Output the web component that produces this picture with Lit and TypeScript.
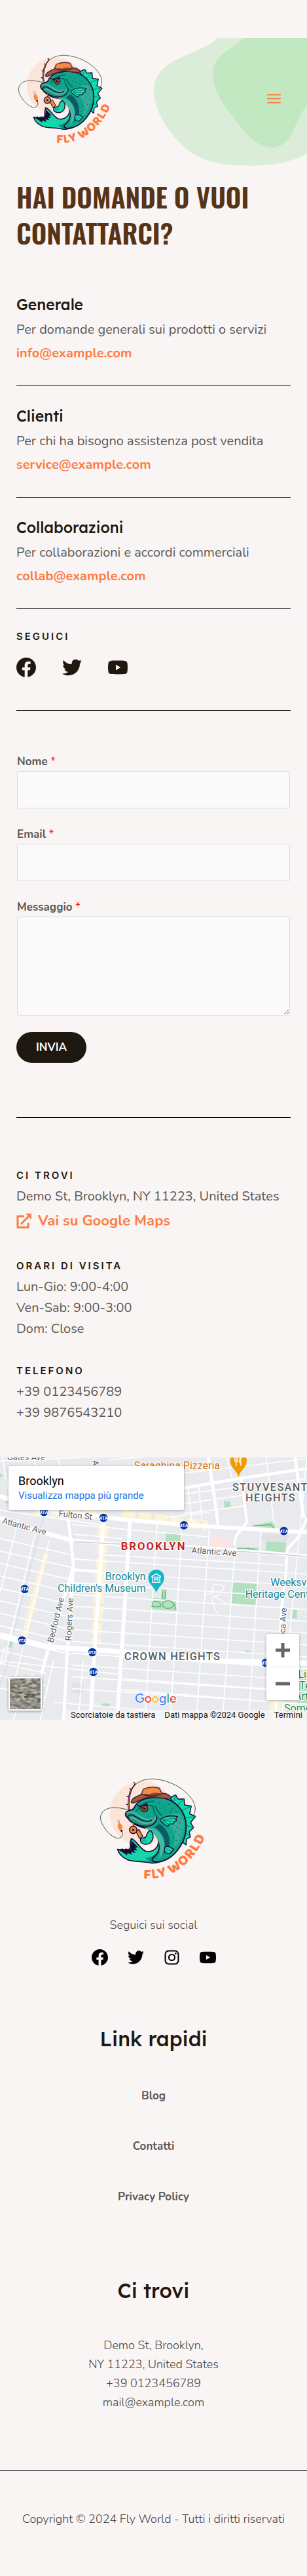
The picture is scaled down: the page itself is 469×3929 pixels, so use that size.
import { LitElement, html, svg, css } from "lit";
import { customElement } from "lit/decorators.js";

const DARK = "#1a0b33";

@customElement("fly-logo")
export class FlyLogo extends LitElement {
  static styles = css`
    :host { display: block; }
    svg { display: block; width: 100%; height: auto; }
    .word { font: 800 58px "Baloo 2", Lato, sans-serif; letter-spacing: 3px; fill: #ff7b42; }
  `;
  render() {
    return html`<svg viewBox="0 0 480 480" role="img" aria-label="Fly World">
      <circle cx="192" cy="182" r="130" fill="#fbe5d9" />
      <g fill="none" stroke="#3f5330" stroke-width="2.6">
        <path d="M146 100 C160 52 205 42 238 43 C300 47 360 78 392 122 C410 148 410 170 400 188" />
        <path d="M133 167 C84 152 32 154 25 196 C22 222 62 276 92 281 C112 284 118 266 110 250" />
      </g>
      <path d="M140 170 C136 140 140 105 150 84" fill="none" stroke="${DARK}" stroke-width="7" />
      <path d="M140 170 C136 140 140 105 150 84" fill="none" stroke="#b96a44" stroke-width="3" />
      <path d="M150 84 L165 62 M142 81 l8 4 M158 56 l8 6 M131 114 h9 M128 146 h9" fill="none" stroke="${DARK}" stroke-width="3.5" />
      <ellipse cx="104" cy="236" rx="9" ry="16" transform="rotate(-15 104 236)" fill="#f58b41" />
      <path d="M101 222 L91 208 M102 220 L99 204" stroke="#7d6b7d" stroke-width="1.6" />
      <circle cx="110" cy="252" r="4" fill="${DARK}" />

      <path d="M305 118 L328 107 L338 124 L362 123 L364 148 L391 152 L384 183 L408 194 L388 218 L400 239 L382 256 L388 276 L371 285 L370 308 L345 290 L350 190 Z" fill="#0fdcae" stroke="${DARK}" stroke-width="4" stroke-linejoin="round" />
      <path d="M328 107 L322 132 M362 123 L336 148 M391 152 L352 170 M408 194 L360 200 M400 239 L364 228 M388 276 L364 258" stroke="#0c7f74" stroke-width="3" />

      <path d="M94 326 l10 2 8-3 8 3 8-3 10 2 6-4 2-12-1-10 4-18 C172 290 180 322 208 334 C236 340 262 318 258 290 L330 320 C300 370 262 384 226 381 C190 372 156 378 134 368 C112 358 98 342 94 326Z" fill="#14d6aa" stroke="${DARK}" stroke-width="4.5" stroke-linejoin="round" />
      <path d="M96 328 L146 328 L150 290 L176 318 L164 320 L174 330 L158 330 L166 340 L148 337 L152 348 L134 341 L132 350 L118 340Z" fill="${DARK}" />
      <path d="M206 362 C232 358 252 346 262 326 L318 330 C292 366 262 380 226 379Z" fill="#0c8f7d" />

      <path d="M129 176 C142 166 158 172 164 152 C178 128 214 118 252 117 C330 118 374 180 370 242 C367 304 318 368 262 376 C236 380 222 370 246 352 C272 326 264 284 246 262 C236 248 222 240 204 240 C176 236 148 220 136 202 C126 194 124 184 129 176Z" fill="#0fa58a" stroke="${DARK}" stroke-width="5" />
      <path d="M204 240 C240 234 262 250 276 278 C292 316 276 350 258 366 C276 324 264 270 204 240Z" fill="#43b8a5" />
      <path d="M262 222 C292 240 312 280 300 322 L276 352 C294 310 284 262 242 238Z" fill="#0a5b66" />
      <path d="M306 190 C330 170 350 180 360 206 C368 250 346 302 316 322 C334 280 322 240 296 226Z" fill="#31ae97" />
      <path d="M232 150 C246 168 238 196 262 204 M244 150 C252 170 262 180 272 190" fill="none" stroke="#07655f" stroke-width="5" />
      <path d="M168 172 Q196 148 234 150 M176 158 Q200 136 240 132" fill="none" stroke="#075b59" stroke-width="4" />

      <path d="M133 184 C150 172 168 190 188 198 C214 212 236 208 242 188 C262 204 240 232 208 232 C176 232 146 216 136 200Z" fill="#23947f" />
      <path d="M132 180 C150 166 170 188 190 197 C208 208 228 212 234 200 M138 203 C156 190 172 212 196 219 C222 226 248 214 248 190" fill="none" stroke="#46bfa5" stroke-width="6" />
      <path d="M136 190 C156 182 170 198 188 208 C206 214 224 216 232 207 M134 192 L142 204 M140 208 C164 226 190 238 222 232 C244 226 256 208 250 190" fill="none" stroke="${DARK}" stroke-width="4" />

      <path d="M166 146 L190 151 L214 140 L216 152 L190 159Z" fill="${DARK}" />
      <ellipse cx="202" cy="163" rx="14" ry="13" fill="#8f4a35" stroke="${DARK}" stroke-width="3" />
      <circle cx="202" cy="161" r="6" fill="#25112c" />
      <circle cx="205" cy="157" r="2.4" fill="#f2b38e" />

      <path d="M266 206 C286 190 312 190 336 194 L328 204 L332 210 L320 216 L318 224 L304 224 L296 234 C282 228 276 218 266 212Z" fill="#12dcae" stroke="${DARK}" stroke-width="3.5" stroke-linejoin="round" />
      <path d="M274 208 L326 200 M276 210 L314 214 M278 213 L300 226" stroke="#0a7770" stroke-width="3" />
      <path d="M284 318 C296 308 312 320 320 326 L304 344 L288 342 L282 332Z" fill="#12dcae" stroke="${DARK}" stroke-width="3.5" />
      <path d="M288 322 L308 332 M286 328 L298 340" stroke="#0a7770" stroke-width="2.5" />
      <g fill="#0a6464">
        ${[[262,140],[282,150],[300,146],[288,166],[314,162],[272,160],[330,176],[306,176],[322,218],[344,220],[334,238],[350,246],[326,256],[342,268],[320,276],[330,290],[312,300],[350,200]].map(
          ([x, y]) => svg`<circle cx=${x} cy=${y} r="2.4" />`
        )}
      </g>

      <path d="M154 218 L160 232" stroke="#b96a44" stroke-width="6" />
      <path d="M168 254 L180 246 L196 274 L182 282Z" fill="#f0893f" stroke="${DARK}" stroke-width="3" />
      <circle cx="157" cy="248" r="15" fill="#f0893f" stroke="${DARK}" stroke-width="4" />
      <circle cx="157" cy="248" r="4.5" fill="${DARK}" />
      <path d="M186 282 L206 278 C216 268 208 258 226 250 C240 262 242 284 226 300 C212 310 192 306 186 294Z" fill="#14d6aa" stroke="${DARK}" stroke-width="4" stroke-linejoin="round" />
      <path d="M194 286 l4 10 M204 284 l2 12" stroke="#0a7770" stroke-width="3" />

      <path d="M188 108 L198 84 Q230 70 262 80 Q268 90 274 106 Q230 122 188 108Z" fill="#f28b46" stroke="#5c2a26" stroke-width="4" />
      <path d="M188 110 Q204 98 222 104 Q250 92 272 104 Q240 120 188 110Z" fill="#8e4a34" />
      <path d="M149 134 C152 118 176 112 192 104 C226 118 256 110 276 100 C296 102 306 112 310 119 C290 128 262 114 226 116 C196 118 176 134 158 140 C150 140 148 138 149 134Z" fill="#a5583a" stroke="#45203a" stroke-width="4" stroke-linejoin="round" />

      <defs><path id="arc" d="M198 443 C296 452 398 396 452 262" /></defs>
      <text class="word"><textPath href="#arc">FLY WORLD</textPath></text>
    </svg>`;
  }
}

const ICONS: Record<string, unknown> = {
  facebook: svg`<path d="M512 256C512 115 397 0 256 0S0 115 0 256c0 127 94 233 216 253V330h-65v-74h65v-56c0-64 38-100 97-100 28 0 57 5 57 5v63h-32c-32 0-42 20-42 40v48h71l-11 74h-60v179c122-20 216-126 216-253Z" />`,
  twitter: svg`<path d="M459 152c1 4 1 9 1 14 0 138-106 298-299 298-59 0-115-17-161-47 8 1 16 1 25 1 49 0 94-16 130-45-46-1-85-31-98-73 6 1 13 2 20 2 9 0 19-2 28-4-48-10-84-52-84-103v-1c14 8 30 12 47 13-28-19-47-51-47-87 0-19 5-37 14-53 52 63 129 105 216 109-2-8-3-16-3-24 0-58 47-105 105-105 30 0 57 13 77 33 24-5 46-13 66-25-8 24-24 45-46 58 21-2 42-8 60-16-14 21-31 39-51 55Z" />`,
  youtube: svg`<path fill-rule="evenodd" d="M501 133c-6-22-23-39-45-45-40-8-120-10-200-10S96 80 56 88c-22 6-39 23-45 45-8 40-11 82-11 123s3 83 11 123c6 22 23 39 45 45 40 8 120 10 200 10s160-2 200-10c22-6 39-23 45-45 8-40 11-82 11-123s-3-83-11-123ZM204 328V184l126 72Z" />`,
  instagram: svg`<rect x="52" y="52" width="408" height="408" rx="108" fill="none" stroke="currentColor" stroke-width="42" /><circle cx="256" cy="256" r="94" fill="none" stroke="currentColor" stroke-width="42" /><circle cx="376" cy="136" r="27" />`,
};

const icon = (name: string) =>
  html`<svg class="glyph" viewBox="0 0 512 512" fill="currentColor" aria-hidden="true">${ICONS[name]}</svg>`;

@customElement("area-map")
export class AreaMap extends LitElement {
  static styles = css`
    :host { display: block; position: relative; height: 400px; overflow: hidden; background: #e8eaed; font-family: Roboto, sans-serif; }
    .canvas { display: block; width: 100%; height: 100%; }
    .road { fill: none; stroke: #fff; }
    .park { fill: #b4dfc0; }
    .shop { fill: none; stroke: #fdf3d6; }
    .lbl { font: 400 39px Roboto, sans-serif; fill: #5a5e63; paint-order: stroke; stroke: #fff; stroke-width: 8px; stroke-linejoin: round; }
    .area { font-weight: 500; font-size: 49px; letter-spacing: 4px; }
    .city { font-weight: 700; font-size: 50px; letter-spacing: 6px; fill: #c5221f; }
    .poi { font-size: 48px; fill: #12889a; }
    .food { fill: #d56e0c; }
    .green { fill: #1d8a48; }
    .mta { font: 700 22px Roboto, sans-serif; fill: #fff; }
    .logo { font: 500 58px Figtree, "Open Sans", sans-serif; paint-order: stroke; stroke: #fff; stroke-width: 6px; }
    .card { position: absolute; left: 13px; top: 13px; box-sizing: border-box; width: 268px; height: 67px; padding: 12px 15px; background: #fff; border-radius: 2px; box-shadow: 0 1px 4px rgba(0, 0, 0, 0.3); }
    .place { font-size: 18px; line-height: 22px; color: #000; }
    .more { display: block; font-size: 15px; line-height: 22px; color: #1a73e8; text-decoration: none; }
    .zoom { position: absolute; right: 12px; bottom: 30px; width: 50px; display: flex; flex-direction: column; background: #fff; border-radius: 2px; box-shadow: 0 1px 4px rgba(0, 0, 0, 0.3); }
    .zoom button { height: 50px; padding: 0; border: 0; background: none; color: #666; }
    .zoom svg { display: block; margin: auto; width: 22px; height: 22px; }
    .rule { height: 1px; margin: 0 6px; background: #e6e6e6; }
    .sat { position: absolute; left: 13px; bottom: 14px; width: 51px; height: 51px; padding: 2px; border: 0; border-radius: 3px; background: #fff; box-shadow: 0 1px 4px rgba(0, 0, 0, 0.4); }
    .sat svg { display: block; width: 100%; height: 100%; }
    .terms { position: absolute; right: 0; bottom: 0; display: flex; gap: 14px; padding: 0 7px; background: rgba(245, 245, 245, 0.75); font-size: 13px; line-height: 15px; color: #222; white-space: nowrap; }
    .terms a { color: inherit; text-decoration: none; }
  `;

  private stations = [[201, 318], [474, 345], [843, 379], [1301, 405], [113, 671], [101, 906], [423, 960], [428, 1050], [1218, 1008]];

  private minorRoads() {
    const d: string[] = [];
    for (let i = 0; i < 12; i++) {
      const y = 545 + i * 54;
      d.push(`M330 ${y - 12} L1407 ${y + 58}`);
    }
    for (let i = 0; i < 13; i++) {
      const y = 440 + i * 57;
      d.push(`M0 ${y} L${i < 9 ? 325 : 210} ${y + (i < 9 ? 74 : 46)}`);
    }
    d.push("M720 370 L664 1269", "M833 410 L780 1269", "M960 385 L900 1269", "M1078 470 L1020 1269", "M1196 400 L1140 1269", "M1407 60 L1290 1269");
    d.push("M0 310 L480 380", "M330 375 L950 432", "M340 420 L560 440", "M470 515 L1300 560", "M540 1080 L1407 1140", "M540 1130 L1407 1200", "M250 1190 L1200 1269", "M0 1000 L540 1060");
    d.push("M845 235 L1407 165", "M845 280 L1407 200", "M845 325 L1130 290", "M750 345 L960 320", "M845 140 L1407 75", "M500 80 L850 50", "M0 85 L600 60");
    d.push("M956 69 L1000 375", "M1040 69 L1065 170", "M1220 69 L1255 370", "M860 200 L880 365", "M910 190 L925 360", "M265 69 L275 110", "M155 69 L165 110", "M10 69 L45 250");
    d.push("M85 350 L0 690", "M225 450 L60 1120", "M160 420 L20 1000", "M150 1060 L60 1269", "M20 940 L0 1020", "M245 1000 L185 1269", "M380 1000 L360 1269");
    return d.join(" ");
  }

  render() {
    return html`
      <svg class="canvas" viewBox="0 69 1407 1200" preserveAspectRatio="xMidYMid slice" role="img" aria-label="Mappa di Brooklyn">
        <rect y="69" width="1407" height="1200" fill="#e8eaed" />
        <path class="shop" stroke-width="26" stroke-dasharray="46 6" d="M210 510 L110 890" />
        <path class="shop" stroke-width="46" stroke-dasharray="60 14" d="M475 380 L440 920 M160 310 L480 335 M560 330 L950 380 M1262 1180 L1260 1269" />
        <g class="park">
          <path d="M760 415 L831 418 L828 462 L758 456Z M1025 268 L1055 270 L1058 300 L1030 302Z M1220 452 L1312 458 L1308 504 L1217 496Z M1066 641 L1180 648 L1174 744 L1058 736Z M696 710 L808 726 L806 770 L692 762Z M742 670 L764 672 L760 720 L738 716Z M1155 380 L1250 362 L1262 394Z M1085 480 L1190 482 L1188 494 L1085 490Z M1340 765 L1362 767 L1360 806 L1338 804Z M470 1194 L504 1196 L502 1212 L466 1210Z M44 910 L60 912 L52 940 L38 936Z M1122 950 L1156 956 L1126 966Z M1360 1080 H1407 V1230 H1370Z M0 140 L15 155 L0 160Z M25 262 L50 266 L48 282 L25 276Z" />
        </g>
        <path d="M965 430 L1040 434 L1042 456 L1066 460 L1062 486 L962 476Z" fill="#fce4e4" />
        <path d="M1205 418 L1320 424 L1312 456 L1200 448Z M330 1100 h50 v46 h-46Z" fill="#dfe1e5" />
        <path class="road" stroke-width="5" d="${this.minorRoads()}" />
        <path d="M200 340 L62 870 M60 930 L0 1120" stroke="#d3d5d9" stroke-width="3" fill="none" />
        <g class="road">
          <path stroke-width="18" d="M180 305 L580 355 L960 385 L1407 412" />
          <path stroke-width="20" d="M0 245 L40 260 M0 345 L170 405 L330 448" />
          <path stroke-width="16" d="M330 448 L560 468 L900 480 L1407 520" />
          <path stroke-width="24" d="M0 880 L220 936 L550 958 L1000 1000 L1250 1006 L1407 1010" />
          <path stroke-width="17" d="M475 350 L440 850 L414 1269 M596 360 L568 800 L536 1269" />
          <path stroke-width="14" d="M312 350 L325 450 L336 560 L325 740 L308 960 L292 1269 M336 570 L290 720 L220 950 L190 1060" />
          <path stroke-width="12" d="M330 582 L460 592 M1105 160 L1132 365 L1080 430 L1074 470 M1407 345 L1370 430 L1316 490 L1310 600 L1290 760 L1262 1269" />
          <path stroke-width="14" d="M845 208 L1100 165 L1407 120 M956 69 L1000 378 M1352 69 L1392 345" />
        </g>
        <path d="M340 454 L900 484 L1407 522" fill="none" stroke="#cfd1d6" stroke-width="5" />
        <path d="M700 730 q40 -10 36 22 h-40Z M745 742 a25 18 0 1 0 50 0 a25 18 0 1 0 -50 0 M795 735 L808 766 M745 680 v34 h12 v-34 M1160 382 L1240 376 L1256 392 M1088 484 l30 4 20 -4 30 6" fill="none" stroke="#57b576" stroke-width="3.5" />
        <path d="M940 700 l30 -10 8 -42 50 8 -20 40 -40 14 20 60 16 20 M975 700 l70 44" fill="none" stroke="#fff" stroke-width="4" />

        <text class="lbl" x="32" y="82">Gates Ave</text>
        <text class="lbl" transform="translate(422 60) rotate(86)">t Av</text>
        <text class="lbl" transform="translate(268 338) rotate(6)">Fulton St</text>
        <text class="lbl" transform="translate(8 370) rotate(15)">Atlantic Ave</text>
        <text class="lbl" transform="translate(877 506) rotate(4)">Atlantic Ave</text>
        <text class="lbl" transform="translate(243 918) rotate(-76)">Bedford Ave</text>
        <text class="lbl" transform="translate(326 908) rotate(-87)">Rogers Ave</text>
        <text class="lbl" transform="translate(1305 920) rotate(-87)">Utica Ave</text>
        <text class="lbl area" x="1065" y="221">STUYVESANT</text>
        <text class="lbl area" x="1125" y="270">HEIGHTS</text>
        <text class="lbl area" x="570" y="996">CROWN HEIGHTS</text>
        <text class="lbl city" x="554" y="492">BROOKLYN</text>
        <text class="lbl poi" x="668" y="630" text-anchor="end">Brooklyn</text>
        <text class="lbl poi" x="668" y="683" text-anchor="end">Children's Museum</text>
        <text class="lbl poi" x="1240" y="656">Weeksville</text>
        <text class="lbl poi" x="1124" y="710">Heritage Center</text>
        <text class="lbl poi food" x="614" y="122">Saraghina Pizzeria</text>
        <text class="lbl poi green" x="1366" y="1076">Lin</text>
        <text class="lbl poi green" x="1372" y="1128">Ter</text>
        <text class="lbl poi green" x="1350" y="1180">Arth</text>
        <text class="lbl poi green" x="1302" y="1232">Somer</text>

        ${this.stations.map(
          ([x, y]) => svg`<circle cx=${x} cy=${y} r="19" fill="#0039a6" /><text class="mta" x=${x - 3} y=${y + 8} text-anchor="middle">MTA</text>`
        )}
        <path d="M716 692 C708 660 678 650 678 619 A38 38 0 0 1 754 619 C754 650 724 660 716 692Z" fill="#12b5cb" stroke="#fff" stroke-width="2" />
        <path d="M696 613 L716 601 L736 613 V616 H696Z M700 618 v20 M732 618 v20 M696 640 h40 M709 636 v-15 l7 8 7 -8 v15" fill="none" stroke="#fff" stroke-width="4" />
        <path d="M1093 158 C1085 126 1055 116 1055 85 A38 38 0 0 1 1131 85 C1131 116 1101 126 1093 158Z" fill="#f29900" />
        <path d="M1076 66 v18 q7 8 14 0 v-18 M1083 66 v42 M1104 108 v-42 q-10 14 -6 26 h6" fill="none" stroke="#fff" stroke-width="4" />
        <text class="logo" x="618" y="1191"><tspan fill="#4285f4">G</tspan><tspan fill="#ea4335">o</tspan><tspan fill="#fbbc04">o</tspan><tspan fill="#4285f4">g</tspan><tspan fill="#34a853">l</tspan><tspan fill="#ea4335">e</tspan></text>
      </svg>
      <div class="card">
        <div class="place">Brooklyn</div>
        <a class="more" href="#mappa">Visualizza mappa più grande</a>
      </div>
      <button class="sat" aria-label="Mostra immagini satellitari">
        <svg viewBox="0 0 47 47" preserveAspectRatio="none">
          <filter id="ground" x="0" y="0" width="100%" height="100%" color-interpolation-filters="sRGB">
            <feTurbulence type="fractalNoise" baseFrequency="0.12 0.3" numOctaves="3" seed="4" />
            <feColorMatrix values="0.7 0 0 0 0.22  0.7 0 0 0 0.21  0.7 0 0 0 0.17  0 0 0 0 1" />
          </filter>
          <rect width="47" height="47" filter="url(#ground)" />
          <path d="M33 24 h5 v4 h-5Z M22 27 h4 v3 h-4Z M14 22 h4 v2 h-4Z" fill="#3d4136" opacity="0.7" />
        </svg>
      </button>
      <div class="zoom">
        <button aria-label="Aumenta zoom"><svg viewBox="0 0 22 22"><path d="M11 0 V22 M0 11 H22" stroke="currentColor" stroke-width="5" /></svg></button>
        <div class="rule"></div>
        <button aria-label="Riduci zoom"><svg viewBox="0 0 22 22"><path d="M0 11 H22" stroke="currentColor" stroke-width="5" /></svg></button>
      </div>
      <div class="terms">
        <span>Scorciatoie da tastiera</span><span>Dati mappa ©2024 Google</span><a href="#termini">Termini</a>
      </div>
    `;
  }
}

@customElement("app-root")
export class AppRoot extends LitElement {
  static styles = css`
    :host { display: block; position: relative; background: #f9f5f4; color: #5c5855; font-family: Nunito, "Noto Sans", sans-serif; font-size: 20px; line-height: 32px; }
    h1, h2, h3, p { margin: 0; }
    a { color: inherit; text-decoration: none; }
    .blob { position: absolute; top: 58px; right: 0; width: 234px; height: 195px; }
    .page { position: relative; }
    .wrap { padding: 0 25px; }
    header { display: flex; align-items: center; justify-content: space-between; padding: 70px 40px 0 20px; }
    header fly-logo { width: 160px; }
    .menu { padding: 0; border: 0; background: none; color: #ff7b42; }
    .menu svg { display: block; width: 21px; height: 21px; }
    h1 { padding-top: 42px; font: 600 41px/55px Oswald, "Roboto Condensed", sans-serif; color: #573318; text-transform: uppercase; }
    h2 { font: 500 23px/32px Lexend, Inter, sans-serif; color: #1f1811; }
    .contacts { padding-top: 67px; }
    .contact { padding-bottom: 32px; border-bottom: 1px solid #000; }
    .contact + .contact { padding-top: 30px; }
    .contact h2 { padding-bottom: 4px; }
    .contact p { line-height: 36px; }
    .mail { display: block; line-height: 35px; font-weight: 700; color: #ff7b42; }
    .cap { font: 600 15px/24px Inter, sans-serif; letter-spacing: 3px; color: #1f1811; text-transform: uppercase; }
    .follow { padding: 30px 0 50px; border-bottom: 1px solid #000; }
    .icons { display: flex; gap: 40px; padding-top: 20px; color: #1f1811; }
    .icons a { display: block; width: 30px; }
    .glyph { display: block; width: 100%; height: auto; overflow: visible; }
    form { padding: 64px 0 83px; border-bottom: 1px solid #000; }
    .field { display: flex; flex-direction: column; padding: 0 1px 26px; }
    .field:last-of-type { padding-bottom: 25px; }
    label { font-size: 17px; line-height: 28px; font-weight: 700; }
    .req { color: #ff1a1a; font-weight: 400; }
    input, textarea { box-sizing: border-box; width: 100%; margin: 0; padding: 12px; border: 1px solid #ddd; border-radius: 2px; background: #fafafa; font: inherit; color: inherit; }
    input { height: 57px; }
    textarea { height: 151px; resize: vertical; }
    .send { display: block; padding: 0 30px; border: 0; border-radius: 24px; background: #1f1811; color: #fff; font: 700 17px/47px Nunito, "Noto Sans", sans-serif; }
    .info { display: flex; flex-direction: column; gap: 36px; padding: 76px 0 52px; }
    .info .cap { padding-bottom: 4px; }
    .go { display: flex; align-items: center; gap: 10px; font-size: 22px; line-height: 42px; font-weight: 700; color: #ff7b42; }
    .go svg { width: 23px; height: 23px; }
    footer { text-align: center; font-size: 18px; line-height: 29px; font-weight: 300; color: #45413f; }
    footer fly-logo { width: 182px; margin: 0 auto; padding: 74px 0 43px; }
    footer .icons { justify-content: center; gap: 30px; padding-top: 22px; color: #000; }
    footer .icons a { width: 25px; }
    footer h2 { font-size: 31px; line-height: 40px; }
    .links { display: flex; flex-direction: column; gap: 48px; padding: 52px 0 109px; color: #5c5855; font-size: 17px; font-weight: 700; }
    .quick { padding-top: 92px; }
    .addr { padding: 49px 0 89px; }
    .copy { border-top: 1px solid #000; padding: 59px 10px 72px; }
  `;

  private contacts = [
    ["Generale", "Per domande generali sui prodotti o servizi", "info@example.com"],
    ["Clienti", "Per chi ha bisogno assistenza post vendita", "service@example.com"],
    ["Collaborazioni", "Per collaborazioni e accordi commerciali", "collab@example.com"],
  ];

  private social(names: string[]) {
    return html`<nav class="icons" aria-label="Social">${names.map((n) => html`<a href="#${n}" aria-label=${n}>${icon(n)}</a>`)}</nav>`;
  }

  render() {
    return html`
      <svg class="blob" viewBox="705 174 702 585" aria-hidden="true">
        <path d="M998 174 C900 262 705 262 705 415 C705 500 760 590 830 660 C910 738 1000 758 1150 758 C1280 758 1360 732 1407 700 V174Z" fill="#dbedd8" />
        <path d="M1117 174 C1060 230 976 250 976 335 C978 430 1036 492 1080 550 C1130 620 1180 674 1250 674 C1345 670 1345 560 1407 480 V174Z" fill="#c2e8c1" />
      </svg>
      <div class="page">
        <header>
          <fly-logo></fly-logo>
          <button class="menu" aria-label="Menu">
            <svg viewBox="0 0 21 21"><path d="M1 4.5 H20 M1 10.5 H20 M1 16.5 H20" stroke="currentColor" stroke-width="2" stroke-linecap="round" /></svg>
          </button>
        </header>
        <main>
          <div class="wrap">
            <h1>Hai domande o vuoi contattarci?</h1>
            <div class="contacts">
              ${this.contacts.map(
                ([t, d, m]) => html`<section class="contact"><h2>${t}</h2><p>${d}</p><a class="mail" href="mailto:${m}">${m}</a></section>`
              )}
            </div>
            <section class="follow">
              <h3 class="cap">Seguici</h3>
              ${this.social(["facebook", "twitter", "youtube"])}
            </section>
            <form @submit=${(e: Event) => e.preventDefault()}>
              <div class="field">
                <label for="nome">Nome <span class="req">*</span></label>
                <input id="nome" type="text" />
              </div>
              <div class="field">
                <label for="email">Email <span class="req">*</span></label>
                <input id="email" type="email" />
              </div>
              <div class="field">
                <label for="msg">Messaggio <span class="req">*</span></label>
                <textarea id="msg"></textarea>
              </div>
              <button class="send" type="submit">INVIA</button>
            </form>
            <div class="info">
              <section>
                <h3 class="cap">Ci trovi</h3>
                <p>Demo St, Brooklyn, NY 11223, United States</p>
                <a class="go" href="#mappa">
                  <svg viewBox="0 0 23 23" fill="none" stroke="currentColor" stroke-width="3" aria-hidden="true"><path d="M12 4 H2 V21 H18 V14" /><path d="M7 16 L19 4" /><path d="M14 0 H23 V9Z" fill="currentColor" stroke="none" /></svg>
                  <span>Vai su Google Maps</span>
                </a>
              </section>
              <section>
                <h3 class="cap">Orari di visita</h3>
                <p>Lun-Gio: 9:00-4:00</p>
                <p>Ven-Sab: 9:00-3:00</p>
                <p>Dom: Close</p>
              </section>
              <section>
                <h3 class="cap">Telefono</h3>
                <p>+39 0123456789</p>
                <p>+39 9876543210</p>
              </section>
            </div>
          </div>
          <area-map></area-map>
        </main>
        <footer>
          <fly-logo></fly-logo>
          <p>Seguici sui social</p>
          ${this.social(["facebook", "twitter", "instagram", "youtube"])}
          <section class="quick">
            <h2>Link rapidi</h2>
            <nav class="links" aria-label="Link rapidi">
              <a href="#blog">Blog</a><a href="#contatti">Contatti</a><a href="#privacy">Privacy Policy</a>
            </nav>
          </section>
          <section>
            <h2>Ci trovi</h2>
            <div class="addr">
              <p>Demo St, Brooklyn,</p>
              <p>NY 11223, United States</p>
              <p>+39 0123456789</p>
              <p>mail@example.com</p>
            </div>
          </section>
          <p class="copy">Copyright © 2024 Fly World - Tutti i diritti riservati</p>
        </footer>
      </div>
    `;
  }
}
